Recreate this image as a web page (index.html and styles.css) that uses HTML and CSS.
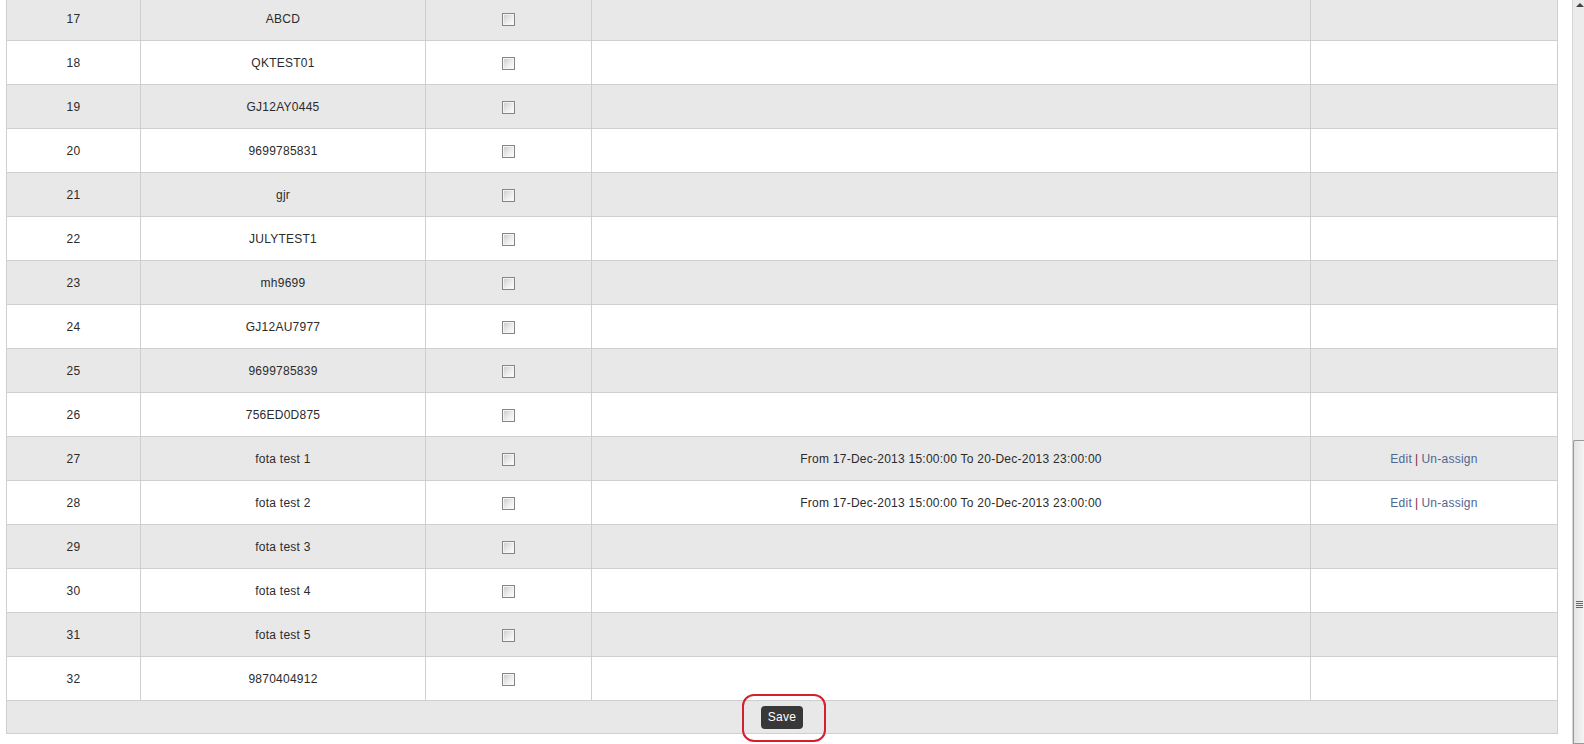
FILE: index.html
```html
<!DOCTYPE html>
<html lang="en">
<head>
    <meta charset="UTF-8">
    <title>Device Schedule</title>
    <link rel="stylesheet" href="styles.css">
</head>
<body>

<div class="screen">
    <div class="content">
        <table class="grid">
            <colgroup>
                <col class="col-no">
                <col class="col-name">
                <col class="col-check">
                <col class="col-schedule">
                <col class="col-action">
            </colgroup>
            <tbody>
                <tr class="odd"><td>17</td><td>ABCD</td><td><input type="checkbox"></td><td></td><td></td></tr>
                <tr><td>18</td><td>QKTEST01</td><td><input type="checkbox"></td><td></td><td></td></tr>
                <tr class="odd"><td>19</td><td>GJ12AY0445</td><td><input type="checkbox"></td><td></td><td></td></tr>
                <tr><td>20</td><td>9699785831</td><td><input type="checkbox"></td><td></td><td></td></tr>
                <tr class="odd"><td>21</td><td>gjr</td><td><input type="checkbox"></td><td></td><td></td></tr>
                <tr><td>22</td><td>JULYTEST1</td><td><input type="checkbox"></td><td></td><td></td></tr>
                <tr class="odd"><td>23</td><td>mh9699</td><td><input type="checkbox"></td><td></td><td></td></tr>
                <tr><td>24</td><td>GJ12AU7977</td><td><input type="checkbox"></td><td></td><td></td></tr>
                <tr class="odd"><td>25</td><td>9699785839</td><td><input type="checkbox"></td><td></td><td></td></tr>
                <tr><td>26</td><td>756ED0D875</td><td><input type="checkbox"></td><td></td><td></td></tr>
                <tr class="odd">
                    <td>27</td><td>fota test 1</td><td><input type="checkbox"></td>
                    <td>From 17-Dec-2013 15:00:00 To 20-Dec-2013 23:00:00</td>
                    <td><a href="#">Edit</a><span class="sep">|</span><a href="#">Un-assign</a></td>
                </tr>
                <tr>
                    <td>28</td><td>fota test 2</td><td><input type="checkbox"></td>
                    <td>From 17-Dec-2013 15:00:00 To 20-Dec-2013 23:00:00</td>
                    <td><a href="#">Edit</a><span class="sep">|</span><a href="#">Un-assign</a></td>
                </tr>
                <tr class="odd"><td>29</td><td>fota test 3</td><td><input type="checkbox"></td><td></td><td></td></tr>
                <tr><td>30</td><td>fota test 4</td><td><input type="checkbox"></td><td></td><td></td></tr>
                <tr class="odd"><td>31</td><td>fota test 5</td><td><input type="checkbox"></td><td></td><td></td></tr>
                <tr><td>32</td><td>9870404912</td><td><input type="checkbox"></td><td></td><td></td></tr>
                <tr class="footer">
                    <td colspan="5">
                        <span class="save-wrap">
                            <button type="submit" class="btn-save">Save</button>
                            <span class="mark"></span>
                        </span>
                    </td>
                </tr>
            </tbody>
        </table>
    </div>

    <!-- window scrollbar as captured -->
    <div class="scrollbar">
        <div class="arrow"></div>
        <div class="thumb"><div class="grip"></div></div>
    </div>
</div>

</body>
</html>
```

FILE: styles.css
```css
body {
    margin: 0;
    font-family: "Liberation Sans", Arial, sans-serif;
    font-size: 12px;
    color: #2b2b2b;
    background: #fff;
}
.screen {
    display: flex;
    height: 744px;
    overflow: hidden;
}
.content {
    flex: 1;
    padding-left: 6px;
}
.grid {
    width: 1551px;
    margin-top: -4px;
    border-collapse: collapse;
    table-layout: fixed;
    letter-spacing: 0.25px;
}
.col-no { width: 134px; }
.col-name { width: 285px; }
.col-check { width: 166px; }
.col-schedule { width: 719px; }
.col-action { width: 247px; }
.grid tr {
    height: 44px;
    background: #fff;
}
.grid tr.odd {
    background: #e8e8e8;
}
.grid td {
    border: 1px solid #cfcfcf;
    padding: 0;
    text-align: center;
    vertical-align: middle;
}
.grid input[type="checkbox"] {
    appearance: none;
    -webkit-appearance: none;
    width: 13px;
    height: 13px;
    margin: 0;
    vertical-align: middle;
    border: 1px solid #858585;
    background: linear-gradient(135deg, #c8c8c8, #ececec 55%, #fff);
    box-shadow: inset 0 0 0 1px #f4f4f4;
}
.grid a {
    color: #4f6792;
    text-decoration: none;
}
.sep {
    color: #7d1d3f;
    margin: 0 3px;
}
.grid tr.footer {
    height: 33px;
    background: #e8e8e8;
}
.save-wrap {
    position: relative;
    display: inline-block;
    vertical-align: middle;
}
.btn-save {
    display: block;
    width: 42px;
    height: 23px;
    padding: 0;
    border: none;
    border-radius: 4px;
    background: #383838;
    color: #fff;
    font-family: "Liberation Sans", Arial, sans-serif;
    font-size: 12px;
    letter-spacing: 0.25px;
}
.mark {
    position: absolute;
    left: -19px;
    top: -12px;
    width: 80px;
    height: 44px;
    border: 2px solid #d4202e;
    border-radius: 12px;
}
.scrollbar {
    width: 11px;
    display: flex;
    flex-direction: column;
    background: #ececec;
    border-left: 1px solid #d6d6d6;
}
.arrow {
    height: 12px;
    position: relative;
}
.arrow::after {
    content: "";
    position: absolute;
    left: 3px;
    top: 3px;
    border-left: 4px solid transparent;
    border-right: 4px solid transparent;
    border-bottom: 4px solid #444;
}
.thumb {
    margin-top: 428px;
    flex: 1;
    border: 1px solid #999;
    border-right: none;
    border-radius: 2px 0 0 0;
    background: linear-gradient(90deg, #e4e4e4, #f4f4f4);
    padding-top: 160px;
}
.grip {
    width: 7px;
    height: 7px;
    margin-left: 2px;
    background: repeating-linear-gradient(180deg, #666 0 1px, transparent 1px 2px);
}
```
